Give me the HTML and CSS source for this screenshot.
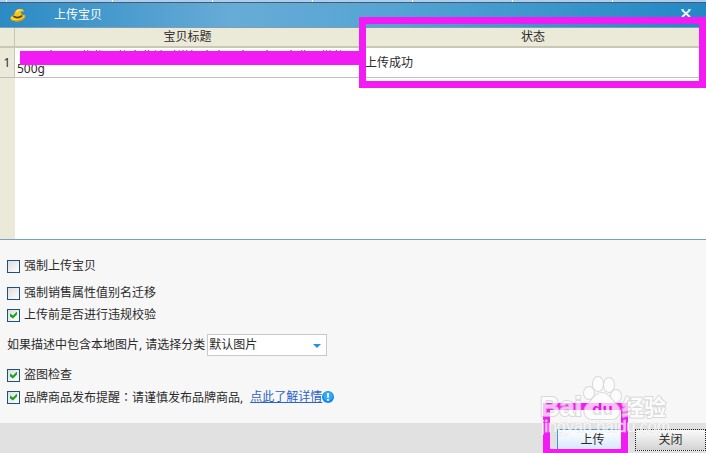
FILE: index.html
```html
<!DOCTYPE html>
<html lang="zh-CN">
<head>
<meta charset="utf-8">
<title>上传宝贝</title>
<link rel="stylesheet" href="styles.css">
</head>
<body>
<div class="window">
  <div class="strip"></div>
  <header class="titlebar">
    <svg class="logo" viewBox="0 0 16 16" aria-hidden="true">
      <path d="M1 10C2 8 4 8 5 8L12 8C16 7 16 10 14 12C11 15 5 15.500 2 13.500C0 12.500 0 11 1 10Z" fill="#e0a010"/>
      <path d="M1 10C3 8 12 9 15 8.500C14 12 5 15 1 12Z" fill="#ffd42a"/>
      <path d="M3.500 9.500 5 5C6 2.500 9 1 13 2.500L14 4.500 10.500 4.500 12.500 9Q8 13 3.500 9.500Z" fill="#f7c51c"/>
      <path d="M6 4C8 1.500 11 2 13 3L9 3.600 7 6Z" fill="#ffe95a"/>
      <path d="M3.500 8.500Q7.500 11 11.800 8L12.500 9.800Q7.500 13 3 10Z" fill="#4e4418"/>
    </svg>
    <h1>上传宝贝</h1>
    <button class="close" aria-label="关闭窗口">
      <svg viewBox="0 0 10 9" aria-hidden="true"><path d="M1 1 9 8M9 1 1 8" stroke="#e7f4fd" stroke-width="2" fill="none"/><path d="M0 .5H3M7 .5H10M0 8.500H3M7 8.500H10" stroke="#b5daf1"/></svg>
    </button>
  </header>
  <main class="list">
    <table>
      <colgroup><col class="col-no"><col class="col-title"><col></colgroup>
      <thead><tr><th></th><th>宝贝标题</th><th>状态</th></tr></thead>
      <tbody><tr>
        <th>1</th>
        <td class="item"><div class="name">昭贝本正品优优贝仙本此地对增加木本贝本正本正本欣正微仙</div>500g<span class="mask"></span></td>
        <td>上传成功</td>
      </tr></tbody>
    </table>
    <div class="frame frame-status"></div>
  </main>
  <section class="options">
    <label class="row first"><input type="checkbox">强制上传宝贝</label>
    <label class="row"><input type="checkbox">强制销售属性值别名迁移</label>
    <label class="row"><input type="checkbox" checked>上传前是否进行违规校验</label>
    <div class="row category">
      <label for="cat">如果描述中包含本地图片, 请选择分类</label>
      <span class="picker"><select id="cat"><option>默认图片</option></select>
      <svg viewBox="0 0 8 4" aria-hidden="true"><path d="M0 0H8L4 4Z" fill="#2592e0"/></svg></span>
    </div>
    <label class="row"><input type="checkbox" checked>盗图检查</label>
    <div class="row">
      <label class="row"><input type="checkbox" checked><span>品牌商品发布提醒<span class="colon" lang="zh-TW">：</span>请谨慎发布品牌商品,</span></label>
      <a href="#">点此了解详情</a>
      <svg class="info" viewBox="0 0 12 12" aria-hidden="true"><circle cx="6" cy="6" r="6" fill="#168ae8"/><circle cx="6" cy="5" r="4.600" fill="#36aaf8"/><path d="M5 2H7L6.700 7H5.300Z" fill="#fff"/><circle cx="6" cy="9" r="1.100" fill="#fff"/></svg>
    </div>
  </section>
  <footer class="actions">
    <button class="upload">上传</button>
    <button class="dismiss">关闭</button>
    <div class="frame frame-upload"></div>
    <svg class="watermark" viewBox="0 0 140 68" aria-hidden="true">
      <defs>
        <linearGradient id="du" gradientUnits="userSpaceOnUse" x1="0" y1="0" x2="0" y2="68">
          <stop offset=".6" stop-color="#d81fd8"/><stop offset=".6" stop-color="#e4e0e4"/>
        </linearGradient>
      </defs>
      <g class="mark">
        <ellipse cx="51" cy="24" rx="5" ry="6"/>
        <ellipse cx="60" cy="15" rx="5" ry="7"/>
        <ellipse cx="71" cy="16" rx="5" ry="7"/>
        <ellipse cx="78" cy="27" rx="5" ry="6"/>
        <path d="M64 24C71 24 73 31 78 35C84 40 82 50 74 50H54C46 50 44 40 50 35C55 31 57 24 64 24Z"/>
        <text class="bai" x="2" y="47">Bai</text>
        <text class="jy" x="84" y="46">经验</text>
        <text class="site" x="3" y="63">jingyan.baidu.com</text>
      </g>
      <text class="du" x="54" y="46">du</text>
    </svg>
  </footer>
</div>
</body>
</html>
```
FILE: styles.css
```css
* { box-sizing: border-box; }

body {
  margin: 0;
  font: 12px/14px "Noto Sans", "Noto Sans CJK SC", sans-serif;
  color: #2b2b2b;
}

button, select, input { font: inherit; color: inherit; margin: 0; }

.window {
  display: flex;
  flex-direction: column;
  min-height: 100vh;
  overflow: hidden;
  background: #f7f7f7;
}

.strip {
  height: 3px;
  border-bottom: 1px solid #55585c;
  background: repeating-linear-gradient(90deg, #a7cff3 0 99px, #fff 99px 100px) 13px 0;
}

.titlebar {
  display: flex;
  align-items: center;
  height: 25px;
  padding: 0 14px 0 10px;
  border-bottom: 1px solid #7d9fb5;
  background: linear-gradient(90deg, #2b8ac4, #67acd7 33%, #55a4d4 55%, #2288c4);
  color: #fff;
}

.logo { width: 16px; height: 16px; margin-right: 28px; }

h1 { margin: 0; font-size: 12px; font-weight: 400; }

.close {
  width: 12px;
  height: 14px;
  margin-left: auto;
  padding: 0 1px 4px;
  border: 0;
  background: none;
}

.close svg { display: block; width: 10px; height: 9px; }

.list {
  position: relative;
  flex: 1;
  border-bottom: 1px solid #7a9fbe;
  background: linear-gradient(90deg, #ebe9d8 15px, #fff 15px);
}

table { width: 100%; table-layout: fixed; border-collapse: separate; border-spacing: 0; }

.col-no { width: 15px; }
.col-title { width: 345px; }

th { padding: 0; font-weight: 400; }

thead th {
  height: 20px;
  border-bottom: 2px solid #cbc7b8;
  background: #ebe9d8;
}

th:first-child { border-right: 1px solid #c8c5b8; }

tbody th, td { height: 30px; border-bottom: 1px solid #bfbfbf; }
tbody th { background: #ebe9d8; }

td { padding: 0 5px; background: #fff; }

.item { position: relative; padding: 0 2px; line-height: 12px; white-space: nowrap; }
.name { padding-left: 4px; }

.mask {
  position: absolute;
  top: 3px;
  left: 5px;
  right: 0;
  height: 14px;
  background: #f31bf3;
}

.frame { position: absolute; border: 7px solid #f31bf3; pointer-events: none; }

.frame-status { top: -11px; left: 359px; right: 0; height: 71px; }

.options {
  display: flex;
  flex-direction: column;
  gap: 2px;
  padding: 16px 7px;
}

.row { display: flex; align-items: center; min-height: 20px; }
.first { margin-bottom: 5px; }
.category { margin: 7px 0; gap: 2px; }

input {
  appearance: none;
  width: 13px;
  height: 13px;
  margin-right: 4px;
  border: 1px solid #1c5180;
  background: linear-gradient(135deg, #dcdcdc, #fff);
}

input:checked::before {
  content: "";
  display: block;
  width: 7px;
  height: 7px;
  margin: 2px;
  background: #21a121;
  clip-path: polygon(0 29%, 43% 57%, 100% 0, 100% 43%, 43% 100%, 0 71%);
}

.picker { position: relative; }

select {
  display: block;
  appearance: none;
  width: 120px;
  height: 22px;
  padding: 0 1px;
  border: 1px solid #c9c9c9;
  border-radius: 0;
  background: #fff;
}

.picker svg { position: absolute; right: 6px; top: 10px; width: 8px; height: 4px; }

.colon { font-family: "Noto Sans CJK TC", sans-serif; }

a { margin-left: 7px; color: #2c62c8; }

.info { width: 12px; height: 12px; }

.actions {
  position: relative;
  display: flex;
  justify-content: flex-end;
  gap: 7px;
  height: 30px;
  padding-top: 6px;
  background: #e1e1e1;
}

.actions button {
  width: 71px;
  height: 22px;
  padding: 0;
  border: 1px solid #4b91cb;
  background: linear-gradient(#fff, #d5e7fc);
}

.actions .dismiss {
  border: 1px dotted #222;
  background: linear-gradient(#fafafa, #d3d3d3);
}

.frame-upload { right: 78px; bottom: -3px; width: 85px; height: 53px; }

.watermark {
  position: absolute;
  right: 28px;
  bottom: 16px;
  width: 140px;
  height: 68px;
  overflow: visible;
  pointer-events: none;
}

.mark {
  fill: #fff;
  stroke: #ccc;
  stroke-width: 2px;
  stroke-linejoin: round;
  opacity: .7;
  paint-order: stroke;
  font-family: "Liberation Sans", "Noto Sans CJK SC", sans-serif;
}

.bai { font-size: 27px; font-weight: 700; }
.jy { font-size: 22px; font-weight: 700; }
.site { font-size: 16px; stroke: #ddd; stroke-width: 1px; }
.du { font: 700 17px "Liberation Sans", sans-serif; fill: url(#du); }
```
